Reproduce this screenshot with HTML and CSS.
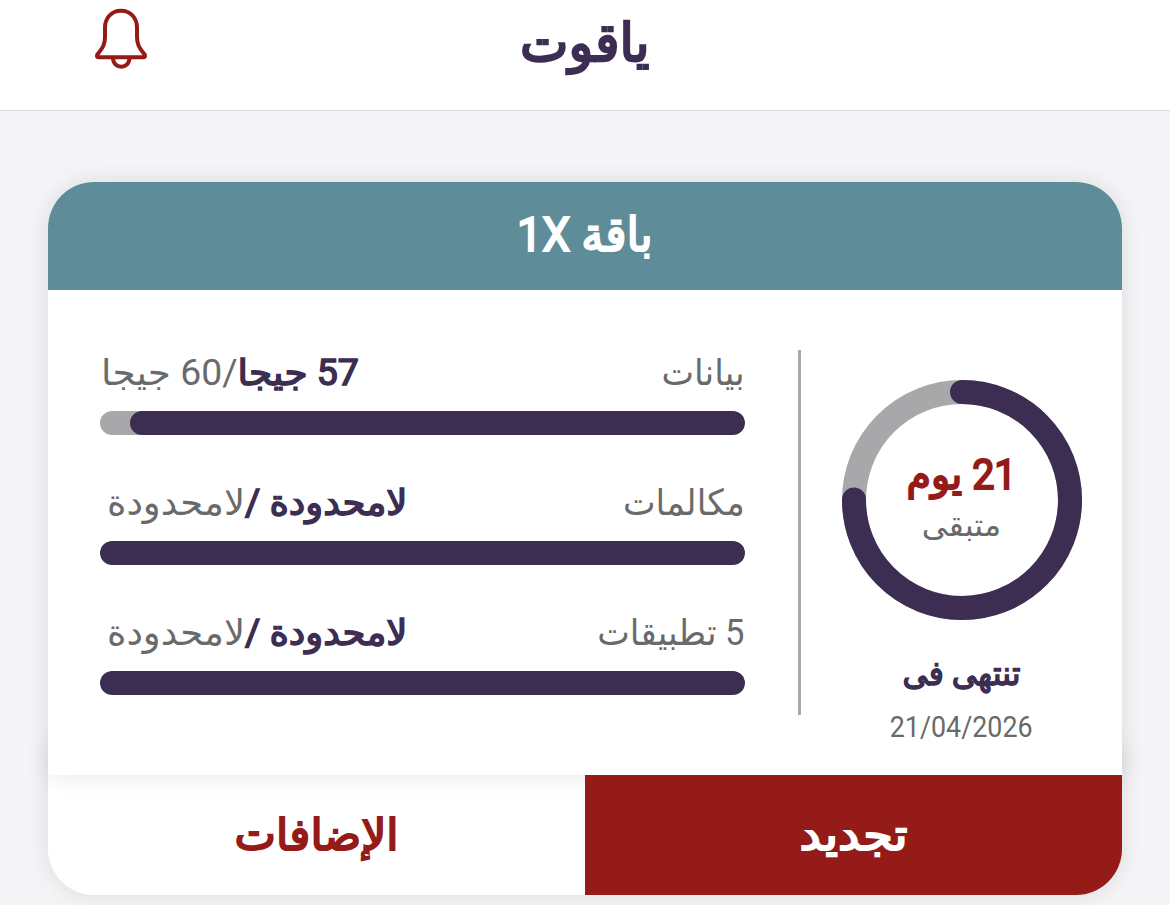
FILE: index.html
```html
<!DOCTYPE html>
<html lang="ar" dir="rtl">
<head>
<meta charset="utf-8">
<title>ياقوت</title>
<link rel="stylesheet" href="styles.css">
</head>
<body>
<header class="topbar">
  <h1 class="brand">ياقوت</h1>
  <button class="bell" aria-label="الإشعارات">
    <svg width="56" height="64" viewBox="0 0 56 64" fill="none" stroke="#951b19" stroke-width="4" stroke-linejoin="round" stroke-linecap="round">
      <path d="M28 4.800C18 4.800 12 12.500 12 21.500V31C12 40 8.500 43 4.300 48.500Q3.200 51.300 6 51.300H50Q52.800 51.300 51.700 48.500C47.500 43 44 40 44 31V21.500C44 12.500 38 4.800 28 4.800Z"/>
      <path d="M20 52C20 63.500 36.500 63.500 36.500 52"/>
    </svg>
  </button>
</header>
<main class="card">
  <div class="plan">
    <h2 class="card-title"><span>باقة 1X</span></h2>
    <div class="body">
      <section class="remaining">
        <div class="ring">
          <svg width="240" height="240" viewBox="0 0 240 240" fill="none" stroke-width="24">
            <circle cx="120" cy="120" r="108" stroke="#a8a8aa"/>
            <path d="M120 12A108 108 0 1 1 12 119.500" stroke="#3c2d52" stroke-linecap="round"/>
          </svg>
          <div class="ring-text"><span class="days">21 يوم</span><span class="left">متبقى</span></div>
        </div>
        <div class="ends">تنتهى فى</div>
        <div class="date">21/04/2026</div>
      </section>
      <section class="usage">
        <div class="item"><div class="row"><span class="name">بيانات</span><span class="amount data"><b>57 جيجا</b>/60 جيجا</span></div><div class="bar"><div class="fill partial"></div></div></div>
        <div class="item"><div class="row"><span class="name">مكالمات</span><span class="amount unlimited"><b>لامحدودة /</b>لامحدودة</span></div><div class="bar"><div class="fill"></div></div></div>
        <div class="item"><div class="row"><span class="name">5 تطبيقات</span><span class="amount unlimited"><b>لامحدودة /</b>لامحدودة</span></div><div class="bar"><div class="fill"></div></div></div>
      </section>
    </div>
  </div>
  <div class="actions"><button class="renew"><span>تجديد</span></button><button class="addons"><span>الإضافات</span></button></div>
</main>
</body>
</html>
```
FILE: styles.css
```css
*{box-sizing:border-box}
body{margin:0;height:905px;overflow:hidden;background:#f5f5f8;font-family:Roboto,"DejaVu Sans",sans-serif;color:#3c2d52}
.topbar{height:111px;background:#fff;border-bottom:1px solid #dadadc;display:grid;grid-template-columns:1fr auto 1fr;padding:0 93px}
.brand{grid-column:2;margin:0;font-size:53px;font-weight:400;-webkit-text-stroke:2.4px;line-height:87px;transform:scaleX(.97)}
.bell{grid-column:3;justify-self:end;border:0;background:none;padding:6px 0 0;height:72px}
.card{margin:71px 48px 0}
.plan{position:relative;z-index:1;border-radius:46px 46px 0 0;background:#fff;box-shadow:0 0 24px rgba(0,0,0,.11)}
.card-title{margin:0;height:108px;border-radius:46px 46px 0 0;background:#5e8d99;color:#fff;text-align:center;font-size:48px;font-weight:400;-webkit-text-stroke:2.1px;line-height:105px}
.card-title span{display:inline-block;transform:scaleX(.93)}
.body{height:485px;display:flex}
.remaining{width:321px;padding-top:90px;display:flex;flex-direction:column;align-items:center}
.ring{display:grid;width:240px;height:240px}
.ring svg,.ring-text{grid-area:1/1}
.ring-text{display:flex;flex-direction:column;align-items:center;padding-top:68px}
.days{font-size:42px;line-height:53px;-webkit-text-stroke:2px;color:#951b19;transform:scaleX(.94)}
.left{font-size:32px;line-height:48px;color:#6a6a6a}
.ends{font-size:34px;line-height:50px;-webkit-text-stroke:1.5px;margin-top:28px;transform:scaleX(.93)}
.date{font-size:29px;line-height:40px;margin-top:9px;color:#6a6a6a;transform:scaleX(.925)}
.usage{width:701px;height:365px;margin-top:60px;border-right:3px solid #a8a8aa;padding-right:53px}
.item{height:130px}
.row{height:61px;padding-bottom:14px;display:flex;justify-content:space-between;align-items:center;font-size:36px;line-height:45px;color:#6a6a6a}
.name{transform:scaleX(.96);transform-origin:right}
.amount{transform-origin:left}
.amount b{color:#3c2d52;font-weight:400;-webkit-text-stroke:1.5px}
.data{margin-left:1px;transform:scaleX(1.038)}
.unlimited{margin-left:7px;transform:scaleX(1.028)}
.bar{height:24px;border-radius:12px;background:#a8a8aa;overflow:hidden}
.fill{height:24px;border-radius:12px;background:#3c2d52}
.partial{width:615px}
.actions{height:150px;margin-top:-30px;padding-top:30px;display:grid;grid-template-columns:1fr 1fr;border-radius:0 0 46px 46px;background:#fff;box-shadow:0 0 24px rgba(0,0,0,.11)}
.actions button{border:0;padding:0;font:400 44px/1 Roboto,"DejaVu Sans",sans-serif;-webkit-text-stroke:2px}
.actions span{display:inline-block}
.renew{position:relative;z-index:2;background:#951b19;color:#fff;border-radius:0 0 46px 0}
.renew span{transform:scaleX(1.09)}
.addons{background:none;color:#951b19}
```
